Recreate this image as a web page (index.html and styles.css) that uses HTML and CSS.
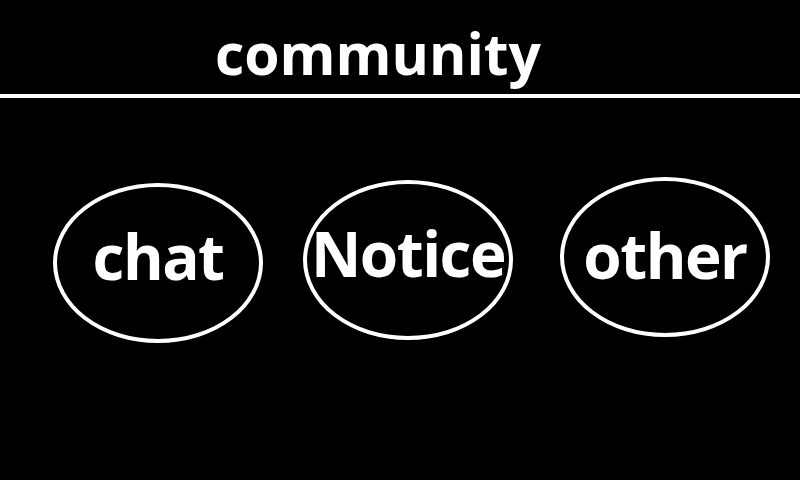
FILE: index.html
```html
<!DOCTYPE html>
<html lang="en">
  <head>
    <meta charset="UTF-8" />
    <meta name="viewport" content="width=device-width, initial-scale=1.0" />
    <title>community</title>
    <link rel="stylesheet" href="styles.css">
  </head>
  <body>
    <div class="header">
      <h1>community</h1>
    </div>

    <div class="menu">
      <div class="bubble bubble-chat">chat</div>
      <div class="bubble bubble-notice">Notice</div>
      <div class="bubble bubble-other">other</div>
    </div>
  </body>
</html>
```

FILE: styles.css
```css
body {
  font-family: "Open Sans", "Noto Sans", sans-serif;
  background-color: #000;
  color: #fff;
  margin: 0;
  padding: 0;
}
.header {
  height: 94px;
  border-bottom: 4px solid #fff;
  display: flex;
  justify-content: center;
  padding-right: 44px;
}
h1 {
  margin: 0;
  padding-top: 6px;
  font-size: 57px;
  font-weight: bold;
  line-height: 94px;
  height: 88px;
}
.menu {
  display: flex;
  align-items: flex-start;
  padding-left: 53px;
}
.bubble {
  width: 210px;
  height: 160px;
  box-sizing: border-box;
  border: 4px solid #fff;
  border-radius: 50%;
  padding-bottom: 14px;
  display: flex;
  align-items: center;
  justify-content: center;
  font-size: 62px;
  font-weight: bold;
  letter-spacing: -1.5px;
}
.bubble-chat {
  margin-top: 85px;
}
.bubble-notice {
  margin-top: 82px;
  margin-left: 40px;
}
.bubble-other {
  margin-top: 79px;
  margin-left: 47px;
  padding-bottom: 4px;
}
```
